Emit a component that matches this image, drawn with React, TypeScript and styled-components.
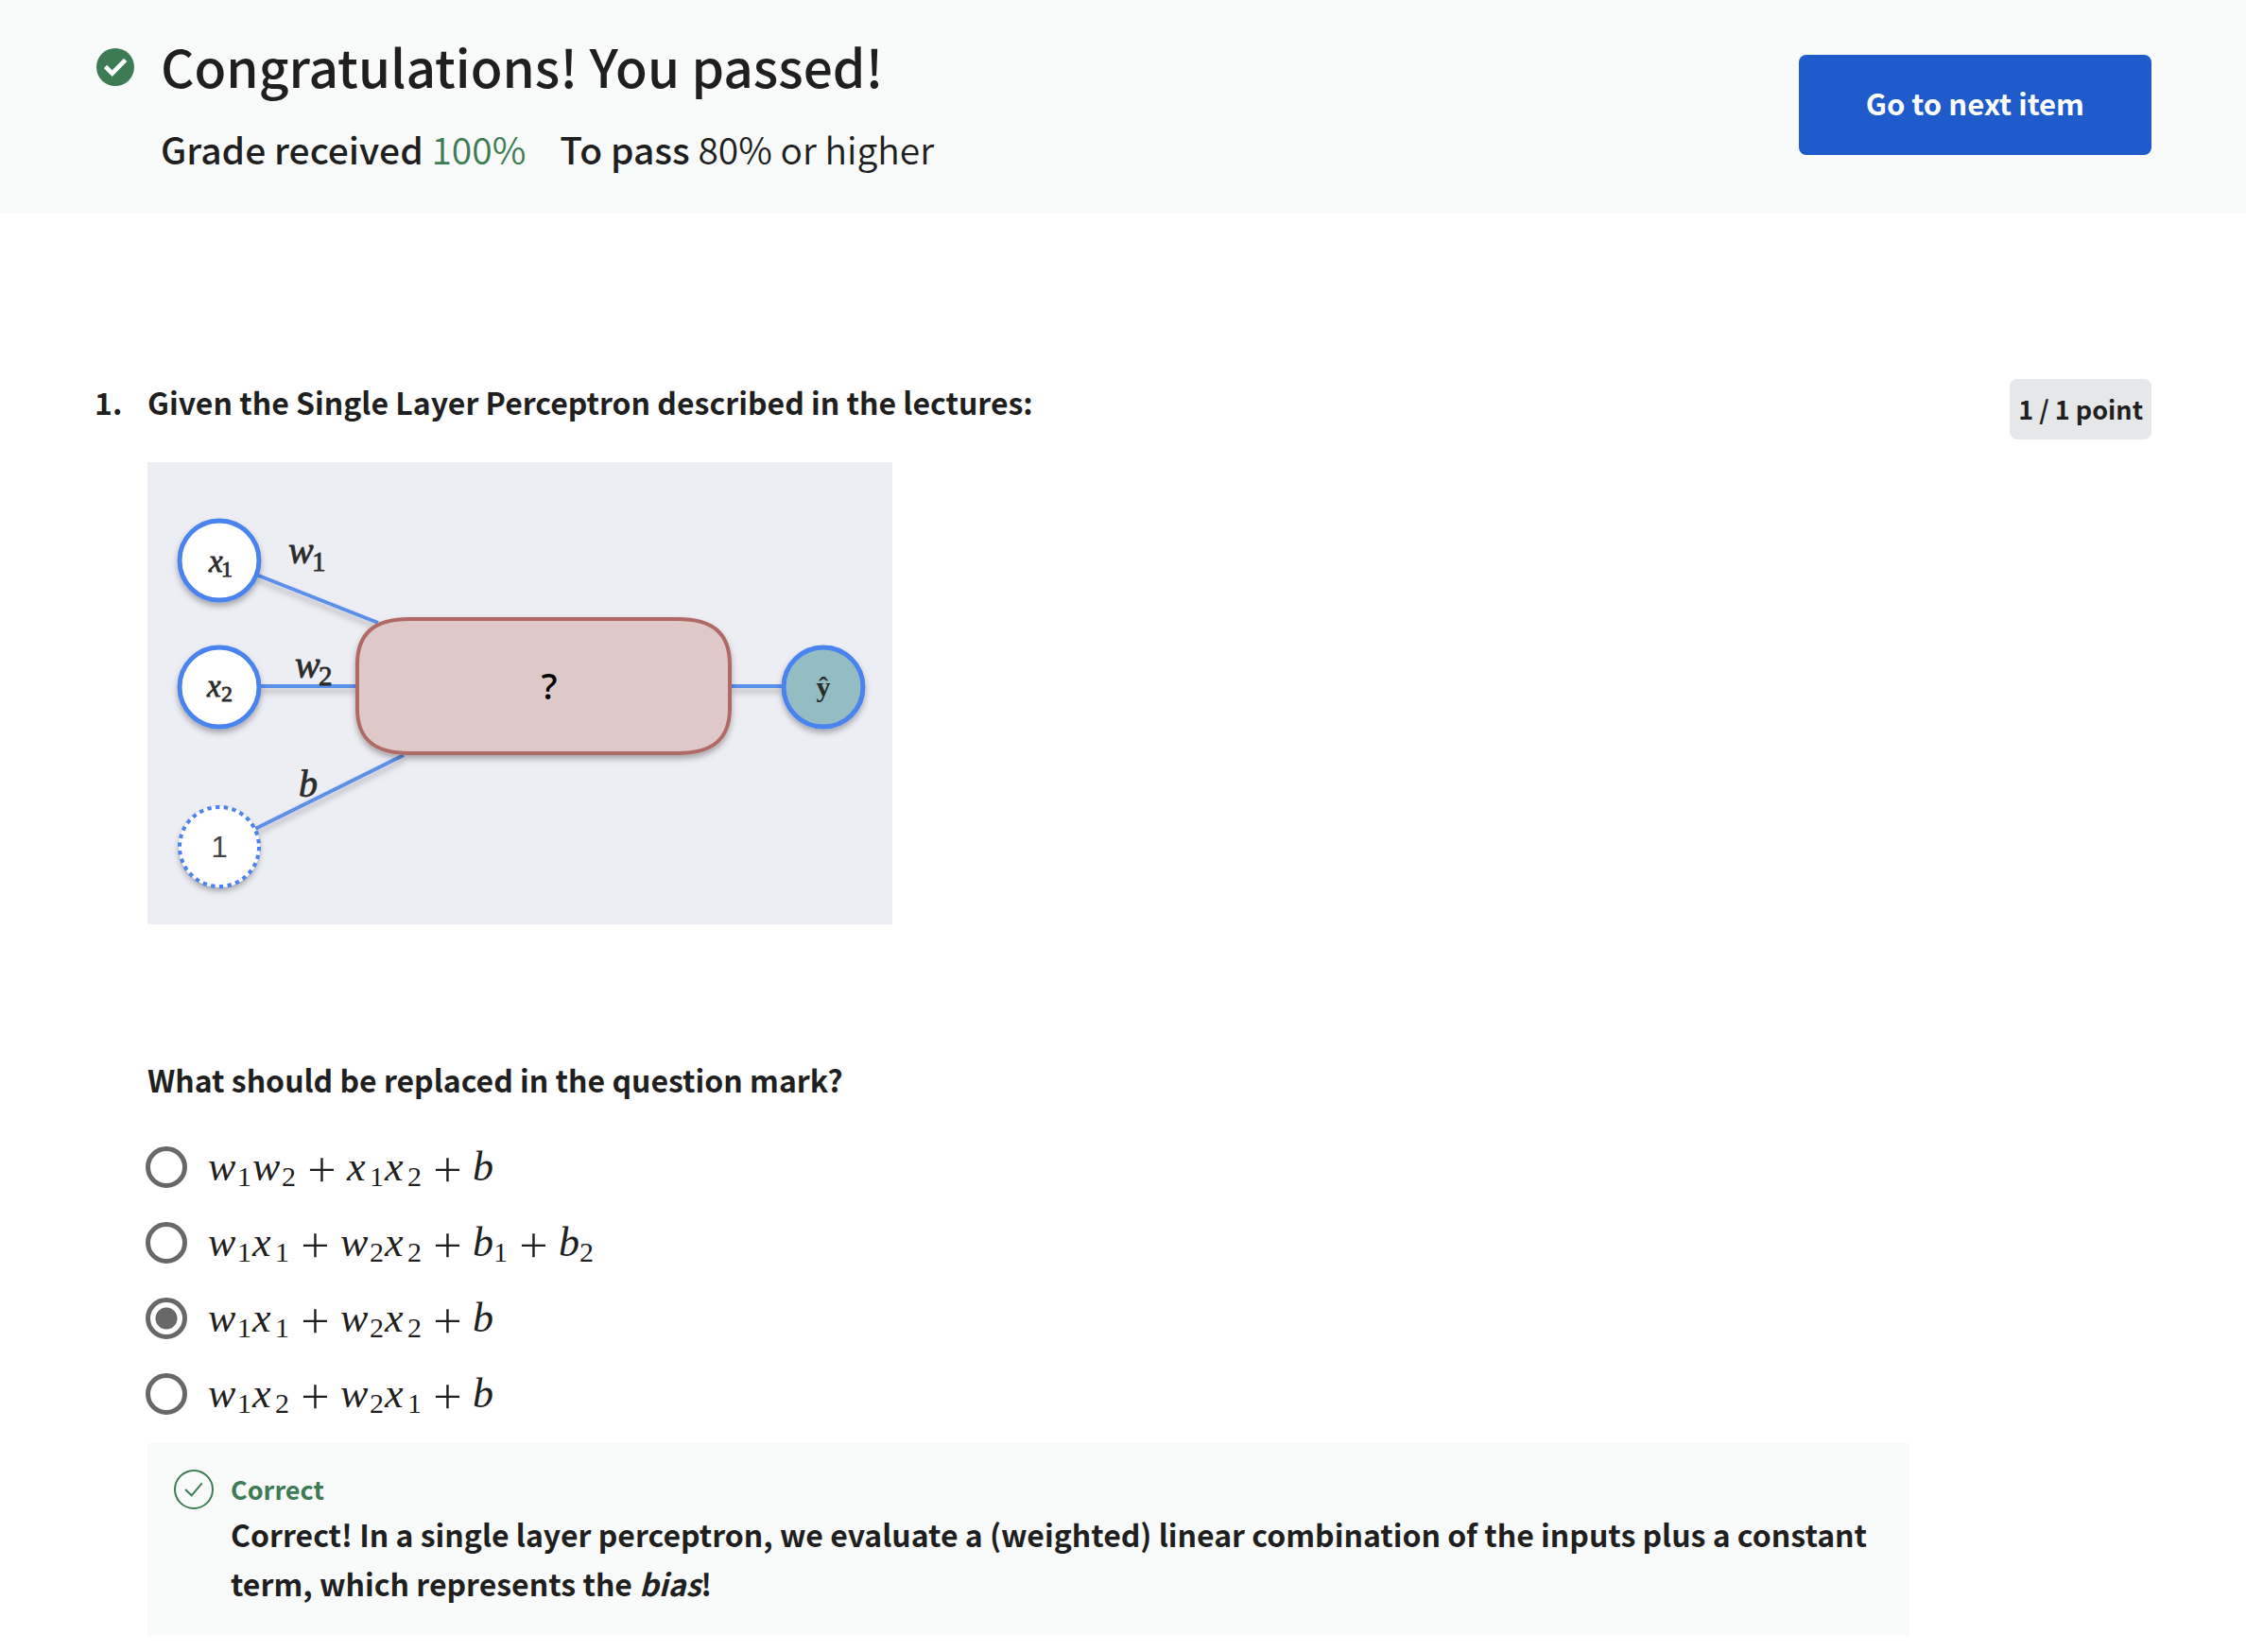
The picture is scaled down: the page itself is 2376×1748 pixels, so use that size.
import React, { useState } from "react";
import styled, { createGlobalStyle } from "styled-components";

const ink = "#1f1f1f";
const green = "#3d7b54";
const tint = "#f8fbfa";
const blue = "#1f5bca";
const mathFont = '"Liberation Serif", "Times New Roman", serif';

const GlobalStyle = createGlobalStyle`
  *, *::before, *::after { box-sizing: border-box; }
  body {
    margin: 0;
    background: #fff;
    color: ${ink};
    font-family: "Noto Sans CJK SC", "Noto Sans", sans-serif;
    font-size: 32px;
    line-height: 52px;
  }
`;

const Header = styled.header`
  display: flex;
  justify-content: space-between;
  align-items: flex-start;
  padding: 29px 100px 40px;
  background: ${tint};
`;

const Result = styled.div`
  display: flex;
  align-items: flex-start;
  gap: 28px;
`;

const PassedIcon = styled.svg`
  flex: none;
  width: 42px;
  height: 84px;
`;

const Title = styled.h1`
  margin: 0 0 20px;
  font-size: 55px;
  font-weight: 500;
  line-height: 80px;
`;

const Grades = styled.div`
  display: flex;
  flex-wrap: wrap;
  gap: 0 36px;
  font-size: 39px;
  line-height: 56px;
`;

const Grade = styled.span<{ $passed?: boolean }>`
  font-weight: 350;
  color: ${(p) => (p.$passed ? green : ink)};

  strong {
    font-weight: 500;
    color: ${ink};
  }
`;

const NextButton = styled.button`
  flex: none;
  margin-top: 29px;
  padding: 25px 71px 29px;
  border: 0;
  border-radius: 8px;
  background: ${blue};
  color: #fff;
  font: inherit;
  font-size: 31px;
  font-weight: 700;
  cursor: pointer;
`;

const Question = styled.main`
  display: grid;
  grid-template-columns: 56px minmax(0, 1fr) 256px;
  align-items: start;
  padding: 174px 100px 18px;
  font-weight: 700;
`;

const Points = styled.div`
  justify-self: end;
  margin-top: 2px;
  padding: 12px 9px;
  border-radius: 8px;
  background: #e5e7e8;
  font-size: 27px;
  line-height: 40px;
`;

const Text = styled.p`
  margin: 0;
`;

const Diagram = styled.svg`
  display: block;
  width: 788px;
  max-width: 100%;
  margin: 38px 0 138px;
  background: #edeef4;
`;

const Options = styled.fieldset`
  margin: 27px -2px 12px;
  padding: 0;
  border: 0;
`;

const Option = styled.label`
  display: flex;
  align-items: center;
  gap: 22px;
  height: 80px;
  cursor: pointer;
`;

const Radio = styled.input`
  appearance: none;
  flex: none;
  width: 44px;
  height: 44px;
  margin: 0;
  border: 5px solid #686868;
  border-radius: 50%;

  &:checked {
    background: radial-gradient(circle, #686868 11px, transparent 12px);
  }
`;

const Formula = styled.span`
  display: flex;
  align-items: baseline;
  font-family: ${mathFont};
  font-size: 44px;
  font-weight: 400;
  line-height: 50px;
`;

const widths: Record<string, number> = { w: 31, x: 24, b: 22 };

const Variable = styled.var<{ $name: string }>`
  width: ${(p) => widths[p.$name]}px;
`;

const Index = styled.span`
  position: relative;
  top: 6px;
  width: 16px;
  font-size: 30px;
  line-height: 30px;
`;

const Plus = styled.span`
  align-self: center;
  width: 53px;
  padding-bottom: 4px;
  text-align: center;
  font-family: Inter, sans-serif;
  font-size: 58px;
  font-weight: 200;
  line-height: 46px;
`;

const Feedback = styled.section`
  display: flex;
  gap: 18px;
  padding: 28px 28px 29px;
  background: ${tint};
`;

const CorrectIcon = styled.svg`
  flex: none;
  width: 42px;
  height: 42px;
`;

const FeedbackTitle = styled.h2`
  margin: 0;
  color: ${green};
  font-size: 27px;
  font-weight: 700;
  line-height: 42px;
`;

const formulas = ["w1 w2 + x1 x2 + b", "w1 x1 + w2 x2 + b1 + b2", "w1 x1 + w2 x2 + b", "w1 x2 + w2 x1 + b"];

function MathText({ source }: { source: string }) {
  return (
    <Formula>
      {source.split(" ").map((token, i) =>
        token === "+" ? (
          <Plus key={i}>+</Plus>
        ) : (
          <React.Fragment key={i}>
            <Variable $name={token[0]}>{token[0]}</Variable>
            {token[1] && <Index>{token[1]}</Index>}
          </React.Fragment>
        )
      )}
    </Formula>
  );
}

function Perceptron() {
  return (
    <Diagram viewBox="0 0 788 489" role="img" aria-label="Single layer perceptron">
      <defs>
        <filter id="shadow" x="-20%" y="-20%" width="140%" height="150%" filterUnits="objectBoundingBox">
          <feDropShadow dx="0" dy="4" stdDeviation="3" floodColor="#000" floodOpacity="0.3" />
        </filter>
        <filter id="lineShadow" x="0" y="0" width="788" height="489" filterUnits="userSpaceOnUse">
          <feDropShadow dx="0" dy="5" stdDeviation="3" floodColor="#000" floodOpacity="0.25" />
        </filter>
      </defs>
      <g stroke="#5a8fec" strokeWidth="4" filter="url(#lineShadow)">
        <path d="M115 119 244 170M118 237H222M112 389 271 310M618 237H672" fill="none" />
      </g>
      <g stroke="#4a83ee" strokeWidth="5" fill="#fff" filter="url(#shadow)">
        <circle cx="76" cy="104" r="42" />
        <circle cx="76" cy="238" r="42" />
        <circle cx="715" cy="238" r="42" fill="#93bcc3" />
      </g>
      <circle cx="76" cy="407" r="43" fill="#fff" filter="url(#shadow)" />
      <circle cx="76" cy="407" r="42" fill="#fff" stroke="#4a83ee" strokeWidth="4" strokeDasharray="4.4 4.4" />
      <path
        d="M222 214C222 181 240 166 277 166H561C598 166 616 181 616 214V261C616 293 598 308 561 308H277C240 308 222 293 222 261Z"
        fill="#dfc8c8"
        stroke="#b06b65"
        strokeWidth="4"
        filter="url(#shadow)"
      />
      <g fontFamily={mathFont} fill="#2b2b2b" stroke="#2b2b2b" strokeWidth="0.8" fontWeight="400">
        <g fontStyle="italic" fontSize="33">
          <text x="65" y="116">x</text>
          <text x="63" y="248">x</text>
        </g>
        <g fontSize="24">
          <text x="78" y="121">1</text>
          <text x="78" y="253">2</text>
        </g>
        <g fontStyle="italic" fontSize="40">
          <text x="149" y="107">w</text>
          <text x="156" y="228">w</text>
          <text x="160" y="354">b</text>
        </g>
        <g fontSize="29">
          <text x="174" y="115">1</text>
          <text x="181" y="236">2</text>
        </g>
        <text x="715" y="248" fontSize="30" fontWeight="700" stroke="none" textAnchor="middle">ŷ</text>
      </g>
      <text x="76" y="418" fontFamily="Liberation Sans, Arial, sans-serif" fontSize="31" fontWeight="400" fill="#444" textAnchor="middle">1</text>
      <text x="425" y="251" fontFamily="Noto Sans, sans-serif" fontSize="38" fontWeight="500" fill="#000" textAnchor="middle">?</text>
    </Diagram>
  );
}

export default function App() {
  const [selected, setSelected] = useState(2);
  return (
    <>
      <GlobalStyle />
      <Header>
        <Result>
          <PassedIcon viewBox="0 0 42 84" aria-hidden="true">
            <circle cx="22" cy="42" r="20" fill={green} />
            <path d="M11.5 41.5 18.7 48.7 32.7 34.3" fill="none" stroke="#fff" strokeWidth="4.6" />
          </PassedIcon>
          <div>
            <Title>Congratulations! You passed!</Title>
            <Grades>
              <Grade $passed>
                <strong>Grade received</strong> 100%
              </Grade>
              <Grade>
                <strong>To pass</strong> 80% or higher
              </Grade>
            </Grades>
          </div>
        </Result>
        <NextButton type="button">Go to next item</NextButton>
      </Header>
      <Question>
        <Text>1.</Text>
        <div>
          <Text>Given the Single Layer Perceptron described in the lectures:</Text>
          <Perceptron />
          <Text id="prompt">What should be replaced in the question mark?</Text>
          <Options aria-labelledby="prompt">
            {formulas.map((formula, i) => (
              <Option key={formula}>
                <Radio type="radio" name="answer" checked={selected === i} onChange={() => setSelected(i)} />
                <MathText source={formula} />
              </Option>
            ))}
          </Options>
          <Feedback>
            <CorrectIcon viewBox="0 0 42 42" fill="none" stroke={green} strokeWidth="2" aria-hidden="true">
              <circle cx="21" cy="21" r="20" />
              <path d="M12 21 18.7 27.3 29.7 14.3" />
            </CorrectIcon>
            <div>
              <FeedbackTitle>Correct</FeedbackTitle>
              <Text>
                Correct! In a single layer perceptron, we evaluate a (weighted) linear combination of the inputs plus a
                constant term, which represents the <em>bias</em>!
              </Text>
            </div>
          </Feedback>
        </div>
        <Points>1 / 1 point</Points>
      </Question>
    </>
  );
}
